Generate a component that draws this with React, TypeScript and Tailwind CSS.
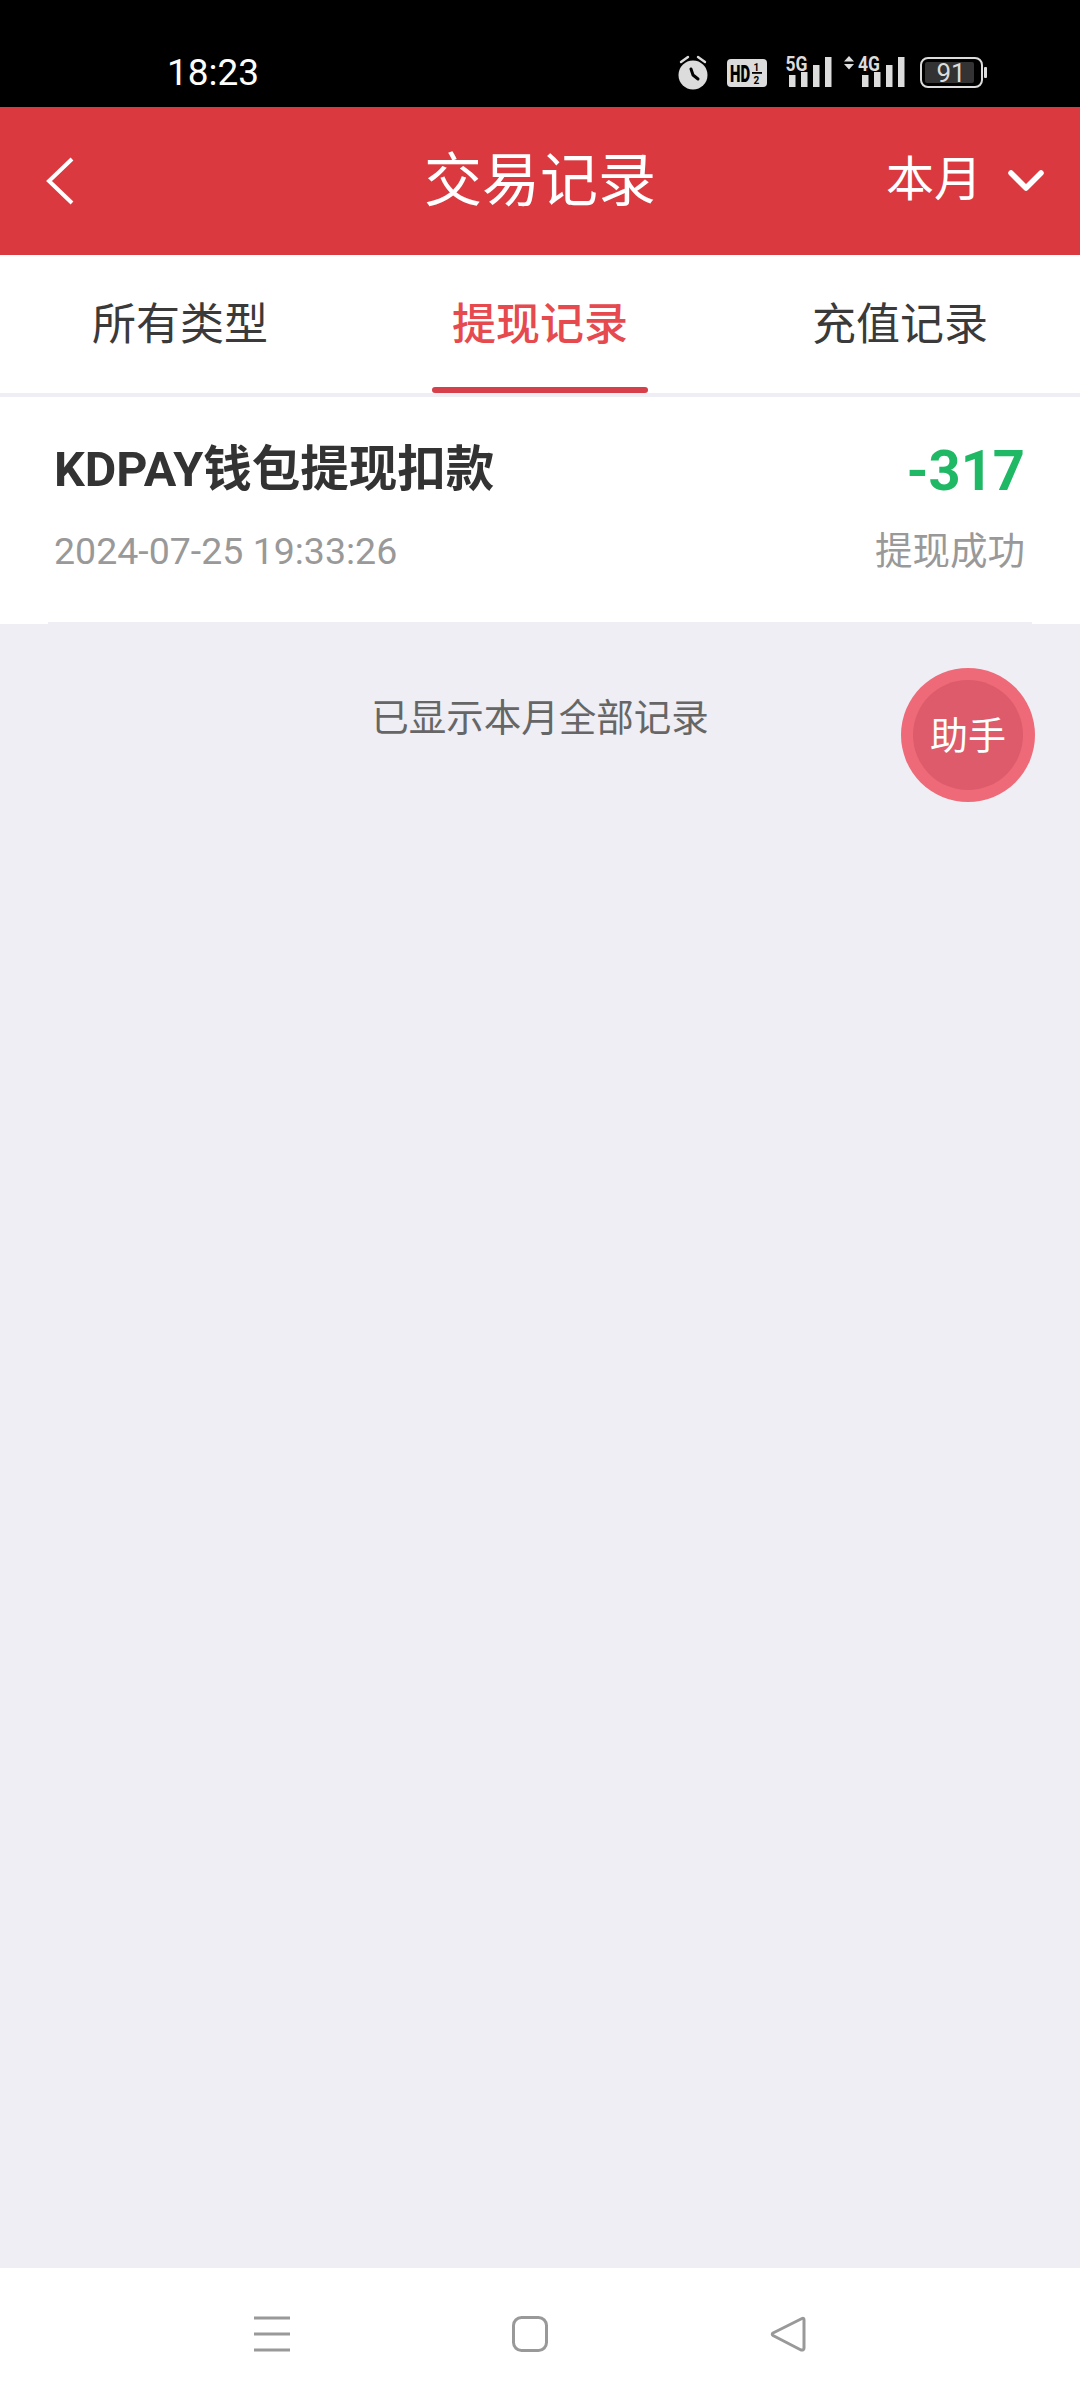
import React from "react";

const cjk = { fontFamily: 'Roboto, "Noto Sans CJK SC", sans-serif' };

function StatusIcons() {
  return (
    <svg width="320" height="40" viewBox="0 0 320 40" fill="none">
      <circle cx="21" cy="23" r="14.5" fill="#dcdcdc" />
      <path d="M9 10 L16 5 M26 5 L33 10" stroke="#dcdcdc" strokeWidth="2.4" strokeLinecap="round" />
      <path d="M19 17 L21 23 L26 27" stroke="#000" strokeWidth="3" strokeLinecap="round" strokeLinejoin="round" />
      <rect x="55" y="7" width="40" height="28" rx="4" fill="#dcdcdc" />
      <text transform="translate(58 30) scale(0.62 1)" fontFamily="Roboto, sans-serif" fontWeight="900" fontSize="24" fill="#000">HD</text>
      <text x="81.5" y="18.5" fontFamily="Roboto, sans-serif" fontWeight="700" fontSize="10" fill="#000">1</text>
      <rect x="80" y="20" width="10" height="1.8" fill="#000" />
      <text x="81.5" y="32" fontFamily="Roboto, sans-serif" fontWeight="700" fontSize="10" fill="#000">2</text>
      <text x="113.5" y="19" fontFamily="Roboto, sans-serif" fontWeight="700" fontSize="21" fill="#dcdcdc" textLength="22" lengthAdjust="spacingAndGlyphs">5G</text>
      <rect x="117" y="23" width="6.5" height="12" fill="#dcdcdc" />
      <rect x="129" y="20" width="6.5" height="15" fill="#dcdcdc" />
      <rect x="141" y="13" width="6.5" height="22" fill="#dcdcdc" />
      <rect x="153" y="5" width="6.5" height="30" fill="#dcdcdc" />
      <path d="M172 9.5 L182 9.5 L177 4 Z M172 12 L182 12 L177 17.5 Z" fill="#dcdcdc" />
      <text x="186" y="19" fontFamily="Roboto, sans-serif" fontWeight="700" fontSize="21" fill="#dcdcdc" textLength="22" lengthAdjust="spacingAndGlyphs">4G</text>
      <rect x="190" y="23" width="6.5" height="12" fill="#dcdcdc" />
      <rect x="202" y="20" width="6.5" height="15" fill="#dcdcdc" />
      <rect x="214" y="13" width="6.5" height="22" fill="#dcdcdc" />
      <rect x="226" y="5" width="6.5" height="30" fill="#dcdcdc" />
      <rect x="249" y="6" width="61" height="29" rx="7" stroke="#dcdcdc" strokeWidth="2" />
      <rect x="253" y="10" width="49" height="21" rx="2" fill="#333333" />
      <rect x="312" y="15" width="3" height="11" rx="1" fill="#dcdcdc" />
      <text x="264.5" y="30" fontFamily="Roboto, sans-serif" fontSize="26" fill="#dcdcdc">91</text>
    </svg>
  );
}

export default function App() {
  return (
    <div className="relative w-[1080px] h-[2400px] flex flex-col overflow-hidden bg-[#eeeef4]" style={cjk}>
      <div className="h-[107px] shrink-0 bg-black flex items-center justify-between pl-[167px] pr-[88px] pt-[37px]">
        <span className="text-[37px] leading-none text-white">18:23</span>
        <StatusIcons />
      </div>

      <div className="h-[148px] shrink-0 bg-[#d9393f] grid grid-cols-[1fr_auto_1fr] items-center text-white">
        <div className="pl-[46px]">
          <svg width="28" height="48" viewBox="0 0 28 48" fill="none">
            <path d="M26 2 L3 24 L26 46" stroke="#fff" strokeWidth="4" />
          </svg>
        </div>
        <div className="text-[58px] leading-none">交易记录</div>
        <div className="flex items-center justify-end gap-[26px] pr-[36px]">
          <span className="text-[48px] leading-none -mt-[2px]">本月</span>
          <svg width="36" height="24" viewBox="0 0 36 24" fill="none">
            <path d="M3 4 L18 19 L33 4" stroke="#fff" strokeWidth="5.5" strokeLinecap="round" strokeLinejoin="round" />
          </svg>
        </div>
      </div>

      <div className="h-[138px] shrink-0 bg-white grid grid-cols-3 text-[44px] leading-none text-[#3a3a3a]">
        <div className="flex items-center justify-center pt-[2px]">所有类型</div>
        <div className="relative flex items-center justify-center pt-[2px] text-[#e64a4f] font-medium">
          提现记录
          <div className="absolute bottom-0 left-[72px] w-[216px] h-[6px] rounded-full bg-[#d6404a]" />
        </div>
        <div className="flex items-center justify-center pt-[2px]">充值记录</div>
      </div>
      <div className="h-[4px] shrink-0 bg-[#eeeef4]" />

      <div className="h-[227px] shrink-0 bg-white px-[48px]">
        <div className="h-full border-b-2 border-[#eeeef4] flex justify-between pl-[6px] pr-[7px]">
          <div className="flex flex-col pt-[45px]">
            <span className="text-[48.5px] leading-[56px] font-bold text-[#333333]">KDPAY钱包提现扣款</span>
            <span className="mt-[31px] text-[37.5px] leading-[44px] text-[#999999]">2024-07-25 19:33:26</span>
          </div>
          <div className="flex flex-col items-end pt-[41px]">
            <span className="text-[56px] leading-[66px] font-bold text-[#1fb864]">-317</span>
            <span className="mt-[26px] text-[37.5px] leading-[42px] text-[#999999]">提现成功</span>
          </div>
        </div>
      </div>

      <div className="flex-1 bg-[#eeeef4] flex justify-center pt-[72px]">
        <span className="text-[37.5px] leading-[44px] text-[#666666]">已显示本月全部记录</span>
      </div>

      <div className="h-[132px] shrink-0 bg-white flex items-center justify-center gap-[222px] pr-[20px]">
        <svg width="36" height="36" viewBox="0 0 36 36" fill="none" className="-mb-[1px] -mt-[2px]">
          <path d="M0 2 H36 M0 18 H36 M0 34 H36" stroke="#999999" strokeWidth="3" />
        </svg>
        <svg width="36" height="36" viewBox="0 0 36 36" fill="none" className="-mb-[1px] -mt-[2px]">
          <rect x="1.5" y="1.5" width="33" height="33" rx="8" stroke="#999999" strokeWidth="3" />
        </svg>
        <svg width="36" height="36" viewBox="0 0 36 36" fill="none" className="-mb-[1px] -mt-[2px]">
          <path d="M32 2.5 L3 17 Q1.5 18 3 19.5 L31 34 Q34 34.5 34 32 V4 Q34 1.5 32 2.5 Z" stroke="#999999" strokeWidth="3" strokeLinejoin="round" />
        </svg>
      </div>

      <div className="absolute left-[901px] top-[668px] w-[134px] h-[134px] rounded-full bg-[#ee6a78] flex items-center justify-center">
        <div className="w-[110px] h-[110px] rounded-full bg-[#dd5b6b] flex items-center justify-center text-[38px] leading-none text-white pt-[2px]">助手</div>
      </div>
    </div>
  );
}
